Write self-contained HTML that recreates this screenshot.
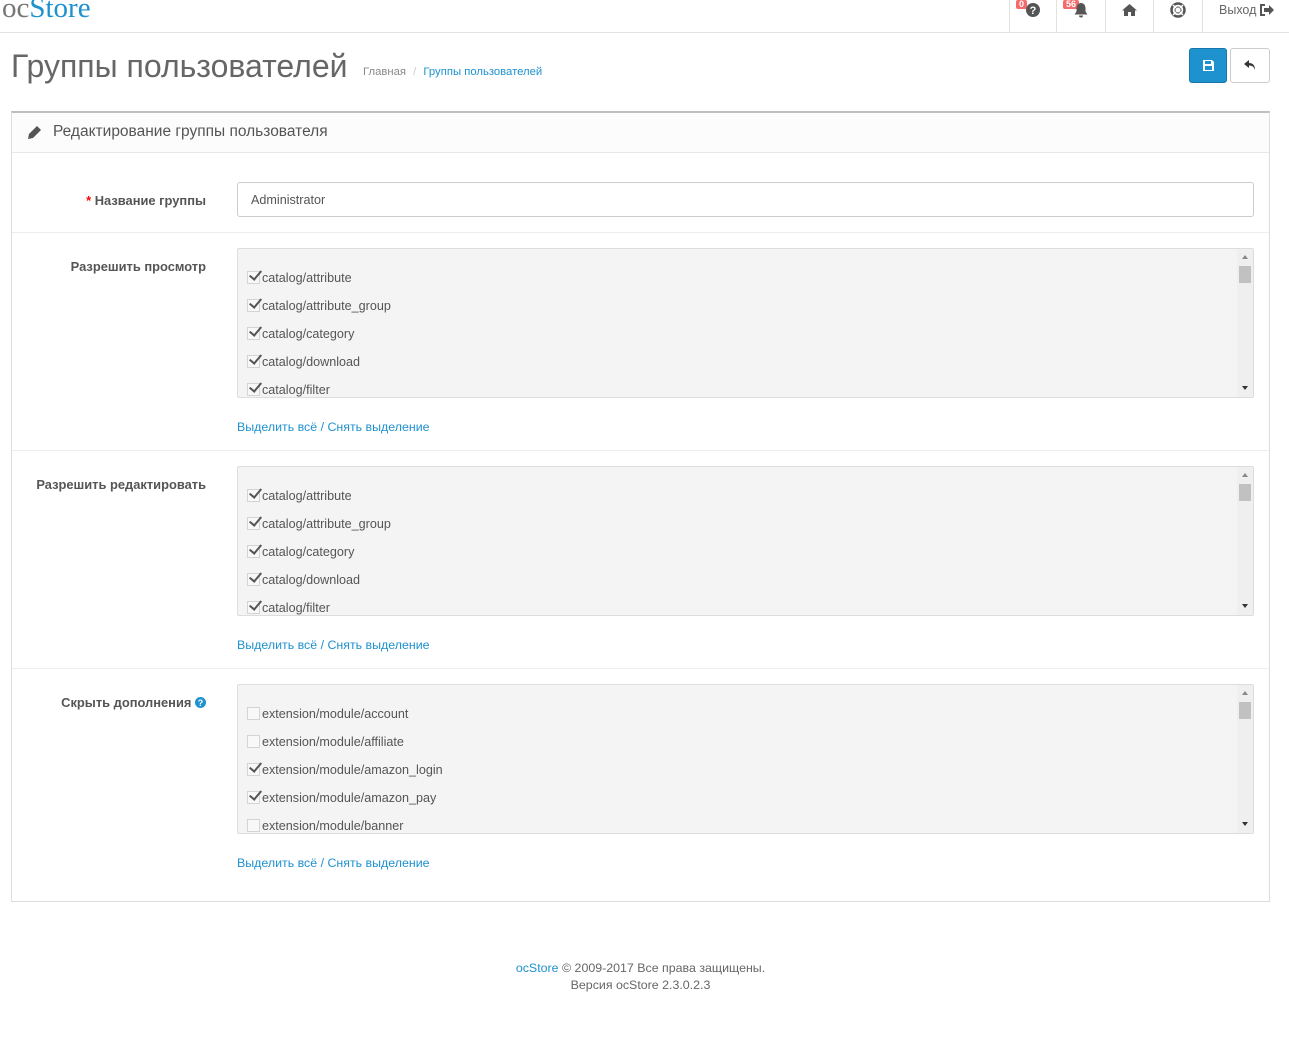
<!DOCTYPE html>
<html><head><meta charset="utf-8"><style>
*{box-sizing:border-box;margin:0;padding:0}
body{width:1289px;height:1047px;background:#fff;font-family:"Liberation Sans",sans-serif;color:#666;font-size:12px;position:relative;overflow:hidden}
.a{position:absolute}
.hdr{left:0;top:0;width:1289px;height:33px;border-bottom:1px solid #e2e2e2}
.nav{top:0;height:32px;border-left:1px solid #e2e2e2}
.badge{position:absolute;background:#f56b6b;color:#fff;font-size:9px;font-weight:bold;border-radius:2px;padding:0 3px;line-height:9px;top:0}
.btn{border-radius:3px;height:35px;top:48px}
.panel{left:11px;top:111px;width:1259px;height:791px;border:1px solid #ddd;border-top:2px solid #bfbfbf}
.ph{left:0;top:0;width:1257px;height:40px;background:#fcfcfc;border-bottom:1px solid #e8e8e8}
.sep{left:0;width:1257px;height:1px;background:#ededed}
.lbl{right:1063px;font-weight:bold;font-size:12.9px;color:#555;text-align:right;white-space:nowrap}
.well{left:225px;width:1017px;height:150px;background:#f4f4f4;border:1px solid #ddd;border-radius:2px;overflow:hidden}
.it{position:absolute;left:9px;font-size:12.6px;color:#555;white-space:nowrap}
.cb{display:inline-block;width:13px;height:13px;border:1px solid #d4d4d4;background:#f8f8f8;vertical-align:-2px;position:relative;margin-right:2px}
.cb.c::after{content:"";position:absolute;left:4px;top:-4px;width:5px;height:10px;border:solid #555;border-width:0 2px 2px 0;transform:rotate(40deg)}
.sb{position:absolute;right:0;top:0;width:16px;height:148px;background:#efefef}
.lnk{left:225px;color:#1e91cf;font-size:12.4px}
</style></head><body>
<div class="a hdr"></div>
<div class="a" style="left:2px;top:-8px;font-family:'Liberation Serif',serif;font-size:29px;line-height:32px"><span style="color:#777">oc</span><span style="color:#1e91cf">Store</span></div>
<div class="a nav" style="left:1009px;width:47px"><span class="badge" style="left:6px">0</span><svg class="a" style="left:16px;top:3px" width="14" height="14" viewBox="0 0 14 14"><circle cx="7" cy="7" r="7" fill="#555"/><text x="7" y="11" font-size="11" font-weight="bold" fill="#fff" text-anchor="middle" font-family="Liberation Sans">?</text></svg></div>
<div class="a nav" style="left:1056px;width:49px"><span class="badge" style="left:6px">56</span><svg class="a" style="left:17px;top:3px" width="14" height="15" viewBox="0 0 14 15"><path d="M7 0c3 0 4.5 2.5 4.5 5.5v3l2 3H.5l2-3v-3C2.5 2.5 4 0 7 0zM5 12.5h4a2 2 0 0 1-4 0z" fill="#555"/></svg></div>
<div class="a nav" style="left:1105px;width:48px"><svg class="a" style="left:16px;top:4px" width="15" height="12" viewBox="0 0 15 12"><path d="M7.5 0L15 6.5h-2V12H9V8H6v4H2V6.5H0z" fill="#555"/></svg></div>
<div class="a nav" style="left:1153px;width:49px"><svg class="a" style="left:16px;top:2px" width="16" height="16" viewBox="0 0 16 16"><circle cx="8" cy="8" r="6.5" fill="none" stroke="#555" stroke-width="2.5"/><circle cx="8" cy="8" r="3" fill="#fff" stroke="#555" stroke-width="1"/><path d="M3 3l3 3M13 3l-3 3M3 13l3-3M13 13l-3-3" stroke="#fff" stroke-width="1.5"/></svg></div>
<div class="a nav" style="left:1202px;width:87px"><span class="a" style="left:16px;top:3px;font-size:12.5px;color:#666">Выход</span><svg class="a" style="left:57px;top:4px" width="14" height="12" viewBox="0 0 14 12"><path d="M5 1H1v10h4" fill="none" stroke="#555" stroke-width="2"/><path d="M4 4h5V1l5 5-5 5V8H4z" fill="#555"/></svg></div>

<div class="a" style="left:11px;top:45px;font-size:32px;color:#666;line-height:42px">Группы пользователей</div>
<div class="a" style="left:363px;top:66px;font-size:11.3px;color:#888">Главная <span style="color:#ccc;padding:0 4px">/</span> <span style="color:#1e91cf">Группы пользователей</span></div>
<div class="a btn" style="left:1189px;width:38px;background:#1e91cf;border:1px solid #1978ab"><svg class="a" style="left:13px;top:11px" width="11" height="11" viewBox="0 0 11 11"><path d="M0 0h9l2 2v9H0z" fill="#fff"/><rect x="2" y="1" width="6" height="3" fill="#1e91cf"/><rect x="2" y="6" width="7" height="4" fill="#1e91cf"/></svg></div>
<div class="a btn" style="left:1230px;width:40px;background:#fff;border:1px solid #ccc"><svg class="a" style="left:13px;top:11px" width="12" height="11" viewBox="0 0 12 11"><path d="M5 0L0 4l5 4V5.5c3 0 5 1 6 4.5C11 5.5 9 3 5 3z" fill="#333"/></svg></div>

<div class="a panel">
 <div class="a ph"><svg class="a" style="left:15px;top:13px" width="14" height="14" viewBox="0 0 14 14"><path d="M10 0l4 4-8 8-5 1 1-5z" fill="#555"/></svg><span class="a" style="left:41px;top:10px;font-size:15.5px;color:#555">Редактирование группы пользователя</span></div>
 <div class="a lbl" style="top:80px"><span style="color:#f00">*</span> Название группы</div>
 <div class="a" style="left:225px;top:69px;width:1017px;height:35px;border:1px solid #ccc;border-radius:3px;padding:10px 13px;font-size:12.6px;color:#555">Administrator</div>
 <div class="a sep" style="top:119px"></div>

 <div class="a lbl" style="top:146px">Разрешить просмотр</div>
 <div class="a well" style="top:135px">
  <div class="it" style="top:22px"><span class="cb c"></span>catalog/attribute</div>
  <div class="it" style="top:50px"><span class="cb c"></span>catalog/attribute_group</div>
  <div class="it" style="top:78px"><span class="cb c"></span>catalog/category</div>
  <div class="it" style="top:106px"><span class="cb c"></span>catalog/download</div>
  <div class="it" style="top:134px"><span class="cb c"></span>catalog/filter</div>
  <div class="sb"><div class="a" style="left:5px;top:6px;border:3px solid transparent;border-bottom:4px solid #888;border-top:0"></div><div class="a" style="left:2px;top:17px;width:12px;height:17px;background:#c1c1c1"></div><div class="a" style="left:5px;top:137px;border:3px solid transparent;border-top:4px solid #333;border-bottom:0"></div></div>
 </div>
 <div class="a lnk" style="top:307px">Выделить всё / Снять выделение</div>
 <div class="a sep" style="top:337px"></div>

 <div class="a lbl" style="top:364px">Разрешить редактировать</div>
 <div class="a well" style="top:353px">
  <div class="it" style="top:22px"><span class="cb c"></span>catalog/attribute</div>
  <div class="it" style="top:50px"><span class="cb c"></span>catalog/attribute_group</div>
  <div class="it" style="top:78px"><span class="cb c"></span>catalog/category</div>
  <div class="it" style="top:106px"><span class="cb c"></span>catalog/download</div>
  <div class="it" style="top:134px"><span class="cb c"></span>catalog/filter</div>
  <div class="sb"><div class="a" style="left:5px;top:6px;border:3px solid transparent;border-bottom:4px solid #888;border-top:0"></div><div class="a" style="left:2px;top:17px;width:12px;height:17px;background:#c1c1c1"></div><div class="a" style="left:5px;top:137px;border:3px solid transparent;border-top:4px solid #333;border-bottom:0"></div></div>
 </div>
 <div class="a lnk" style="top:525px">Выделить всё / Снять выделение</div>
 <div class="a sep" style="top:555px"></div>

 <div class="a lbl" style="top:582px">Скрыть дополнения <svg width="11" height="11" viewBox="0 0 11 11" style="vertical-align:-1px"><circle cx="5.5" cy="5.5" r="5.5" fill="#1e91cf"/><text x="5.5" y="9" font-size="9" font-weight="bold" fill="#fff" text-anchor="middle" font-family="Liberation Sans">?</text></svg></div>
 <div class="a well" style="top:571px">
  <div class="it" style="top:22px"><span class="cb"></span>extension/module/account</div>
  <div class="it" style="top:50px"><span class="cb"></span>extension/module/affiliate</div>
  <div class="it" style="top:78px"><span class="cb c"></span>extension/module/amazon_login</div>
  <div class="it" style="top:106px"><span class="cb c"></span>extension/module/amazon_pay</div>
  <div class="it" style="top:134px"><span class="cb"></span>extension/module/banner</div>
  <div class="sb"><div class="a" style="left:5px;top:6px;border:3px solid transparent;border-bottom:4px solid #888;border-top:0"></div><div class="a" style="left:2px;top:17px;width:12px;height:17px;background:#c1c1c1"></div><div class="a" style="left:5px;top:137px;border:3px solid transparent;border-top:4px solid #333;border-bottom:0"></div></div>
 </div>
 <div class="a lnk" style="top:743px">Выделить всё / Снять выделение</div>
</div>

<div class="a" style="left:0;width:1281px;top:960px;text-align:center;font-size:12.4px;color:#666;line-height:17px"><span style="color:#1e91cf">ocStore</span> © 2009-2017 Все права защищены.<br>Версия ocStore 2.3.0.2.3</div>
</body></html>
